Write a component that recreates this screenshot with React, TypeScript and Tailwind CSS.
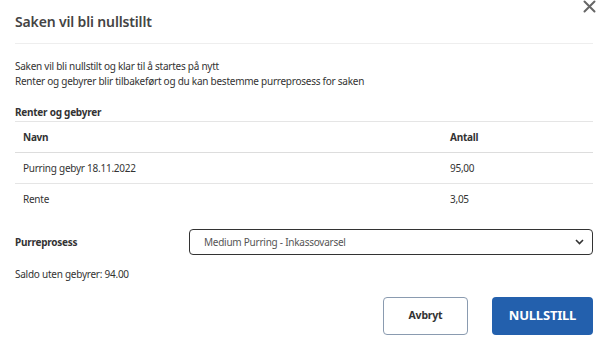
import React from "react";

export default function App() {
  const font = { fontFamily: '"Noto Sans", "Open Sans", sans-serif' };
  return (
    <div className="w-[610px] h-[342px] bg-white relative overflow-hidden text-[#333] tracking-[-0.25px]" style={font}>
      <button className="absolute right-[14px] top-[0px] text-[#666]" aria-label="Lukk">
        <svg width="13" height="13" viewBox="0 0 13 13">
          <path d="M1.5 1.5 L11.5 11.5 M11.5 1.5 L1.5 11.5" stroke="#666" strokeWidth="2" strokeLinecap="round" />
        </svg>
      </button>
      <div className="px-[15px] pr-[17px]">
        <div className="pt-[13px] pb-[12px] border-b border-[#eeeeee]">
          <h1 className="text-[14px] font-semibold text-[#444] leading-[18px] tracking-[-0.15px]">Saken vil bli nullstillt</h1>
        </div>
        <div className="pt-[15px] text-[10px] leading-[15px] text-[#333]">
          <p>Saken vil bli nullstilt og klar til å startes på nytt</p>
          <p>Renter og gebyrer blir tilbakeført og du kan bestemme purreprosess for saken</p>
        </div>
        <div className="mt-[16px] text-[10px] font-bold leading-[14px] pb-[2px] border-b border-[#e5e5e5]">Renter og gebyrer</div>
        <div className="text-[10px]">
          <div className="flex items-center h-[31px] border-b border-[#dddddd] font-bold px-[8px]">
            <div className="flex-1">Navn</div>
            <div className="w-[135px]">Antall</div>
          </div>
          <div className="flex items-center h-[31px] border-b border-[#e5e5e5] px-[8px]">
            <div className="flex-1">Purring gebyr 18.11.2022</div>
            <div className="w-[135px]">95,00</div>
          </div>
          <div className="flex items-center h-[31px] px-[8px]">
            <div className="flex-1">Rente</div>
            <div className="w-[135px]">3,05</div>
          </div>
        </div>
        <div className="mt-[14px] flex items-center">
          <div className="w-[174px] text-[10px] font-bold">Purreprosess</div>
          <div className="flex-1 h-[26px] border border-[#333] rounded-[4px] flex items-center justify-between pl-[14px] pr-[8px] text-[10px] text-[#555]">
            <span>Medium Purring - Inkassovarsel</span>
            <svg width="9" height="6" viewBox="0 0 9 6">
              <path d="M1 1 L4.5 4.5 L8 1" stroke="#333" strokeWidth="1.6" fill="none" />
            </svg>
          </div>
        </div>
        <div className="mt-[12px] text-[10px] leading-[15px]">Saldo uten gebyrer: 94.00</div>
        <div className="mt-[15px] flex justify-end gap-[24px]">
          <button className="w-[85px] h-[38px] border border-[#8a9bb0] rounded-[4px] bg-white text-[10.5px] font-bold text-[#333] tracking-[-0.2px]">Avbryt</button>
          <button className="w-[101px] h-[38px] rounded-[4px] bg-[#2360ad] text-white text-[13px] font-bold tracking-[-0.2px]">NULLSTILL</button>
        </div>
      </div>
    </div>
  );
}
